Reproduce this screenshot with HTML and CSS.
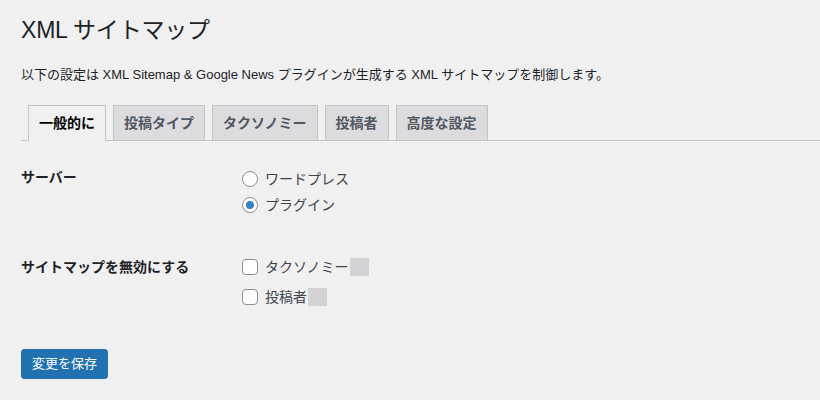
FILE: index.html
```html
<!DOCTYPE html>
<html lang="ja">
<head>
<meta charset="utf-8">
<title>XML サイトマップ</title>
<link rel="stylesheet" href="styles.css">
</head>
<body>
<div class="wrap">
  <h1 class="title">XML サイトマップ</h1>
  <p class="desc">以下の設定は XML Sitemap &amp; Google News プラグインが生成する XML サイトマップを制御します。</p>
  <nav class="tabs">
    <a class="tab active">一般的に</a>
    <a class="tab">投稿タイプ</a>
    <a class="tab">タクソノミー</a>
    <a class="tab">投稿者</a>
    <a class="tab">高度な設定</a>
  </nav>
  <form class="form">
    <div class="row row-server">
      <div class="th">サーバー</div>
      <div class="td">
        <label class="opt radio-opt"><span class="radio"></span>ワードプレス</label>
        <label class="opt radio-opt"><span class="radio checked"></span>プラグイン</label>
      </div>
    </div>
    <div class="row row-disable">
      <div class="th">サイトマップを無効にする</div>
      <div class="td td-check">
        <label class="opt check-opt"><span class="check"></span>タクソノミー<span class="blur"></span></label>
        <label class="opt check-opt"><span class="check"></span>投稿者<span class="blur"></span></label>
      </div>
    </div>
    <div class="submit">
      <button type="button" class="button-primary">変更を保存</button>
    </div>
  </form>
</div>
</body>
</html>
```
FILE: styles.css
```css
html, body {
  margin: 0;
  padding: 0;
  background: #f0f0f1;
}
body {
  font-family: "Liberation Sans", "Noto Sans CJK JP", sans-serif;
  color: #1d2327;
  font-size: 13px;
}
.wrap {
  padding: 15px 0 0 21px;
}
.title {
  margin: 0;
  font-size: 23px;
  font-weight: 400;
  line-height: 30px;
  letter-spacing: -0.2px;
  color: #1d2327;
}
.desc {
  margin: 20px 0 0;
  font-size: 13px;
  line-height: 19px;
  color: #1d2327;
}
.tabs {
  display: flex;
  gap: 7px;
  margin-top: 21px;
  padding-left: 7px;
  border-bottom: 1px solid #c3c4c7;
}
.tab {
  display: block;
  padding: 5px 10px;
  font-size: 14px;
  font-weight: 600;
  line-height: 24px;
  color: #50575e;
  background: #dcdcde;
  border: 1px solid #c3c4c7;
  margin-bottom: -1px;
  white-space: nowrap;
}
.tab.active {
  color: #000;
  background: #f0f0f1;
  border-bottom-color: #f0f0f1;
}
.row {
  display: flex;
}
.th {
  width: 210px;
  flex: none;
  font-size: 14px;
  font-weight: 600;
  line-height: 18px;
  color: #1d2327;
}
.td {
  display: flex;
  flex-direction: column;
  padding-left: 11px;
}
.row-server {
  margin-top: 27px;
}
.row-server .td {
  gap: 8px;
  padding-top: 2px;
}
.row-disable {
  margin-top: 44px;
}
.row-disable .td {
  gap: 12px;
}
.opt {
  display: flex;
  align-items: center;
  font-size: 14px;
  line-height: 18px;
  color: #3c434a;
}
.radio, .check {
  box-sizing: border-box;
  width: 16px;
  height: 16px;
  border: 1px solid #8c8f94;
  background: #fff;
  margin-right: 7px;
  flex: none;
}
.radio {
  border-radius: 50%;
  display: flex;
  align-items: center;
  justify-content: center;
}
.radio.checked::before {
  content: "";
  width: 8px;
  height: 8px;
  border-radius: 50%;
  background: #3582c4;
}
.check {
  border-radius: 4px;
}
.blur {
  display: inline-block;
  width: 19px;
  height: 18px;
  margin-left: 1px;
  background: #d3d3d5;
}
.submit {
  margin-top: 43px;
}
.button-primary {
  font-family: inherit;
  font-size: 13px;
  line-height: 28px;
  height: 30px;
  padding: 0 10px;
  color: #fff;
  background: #2271b1;
  border: 1px solid #2271b1;
  border-radius: 3px;
  cursor: pointer;
}
```
